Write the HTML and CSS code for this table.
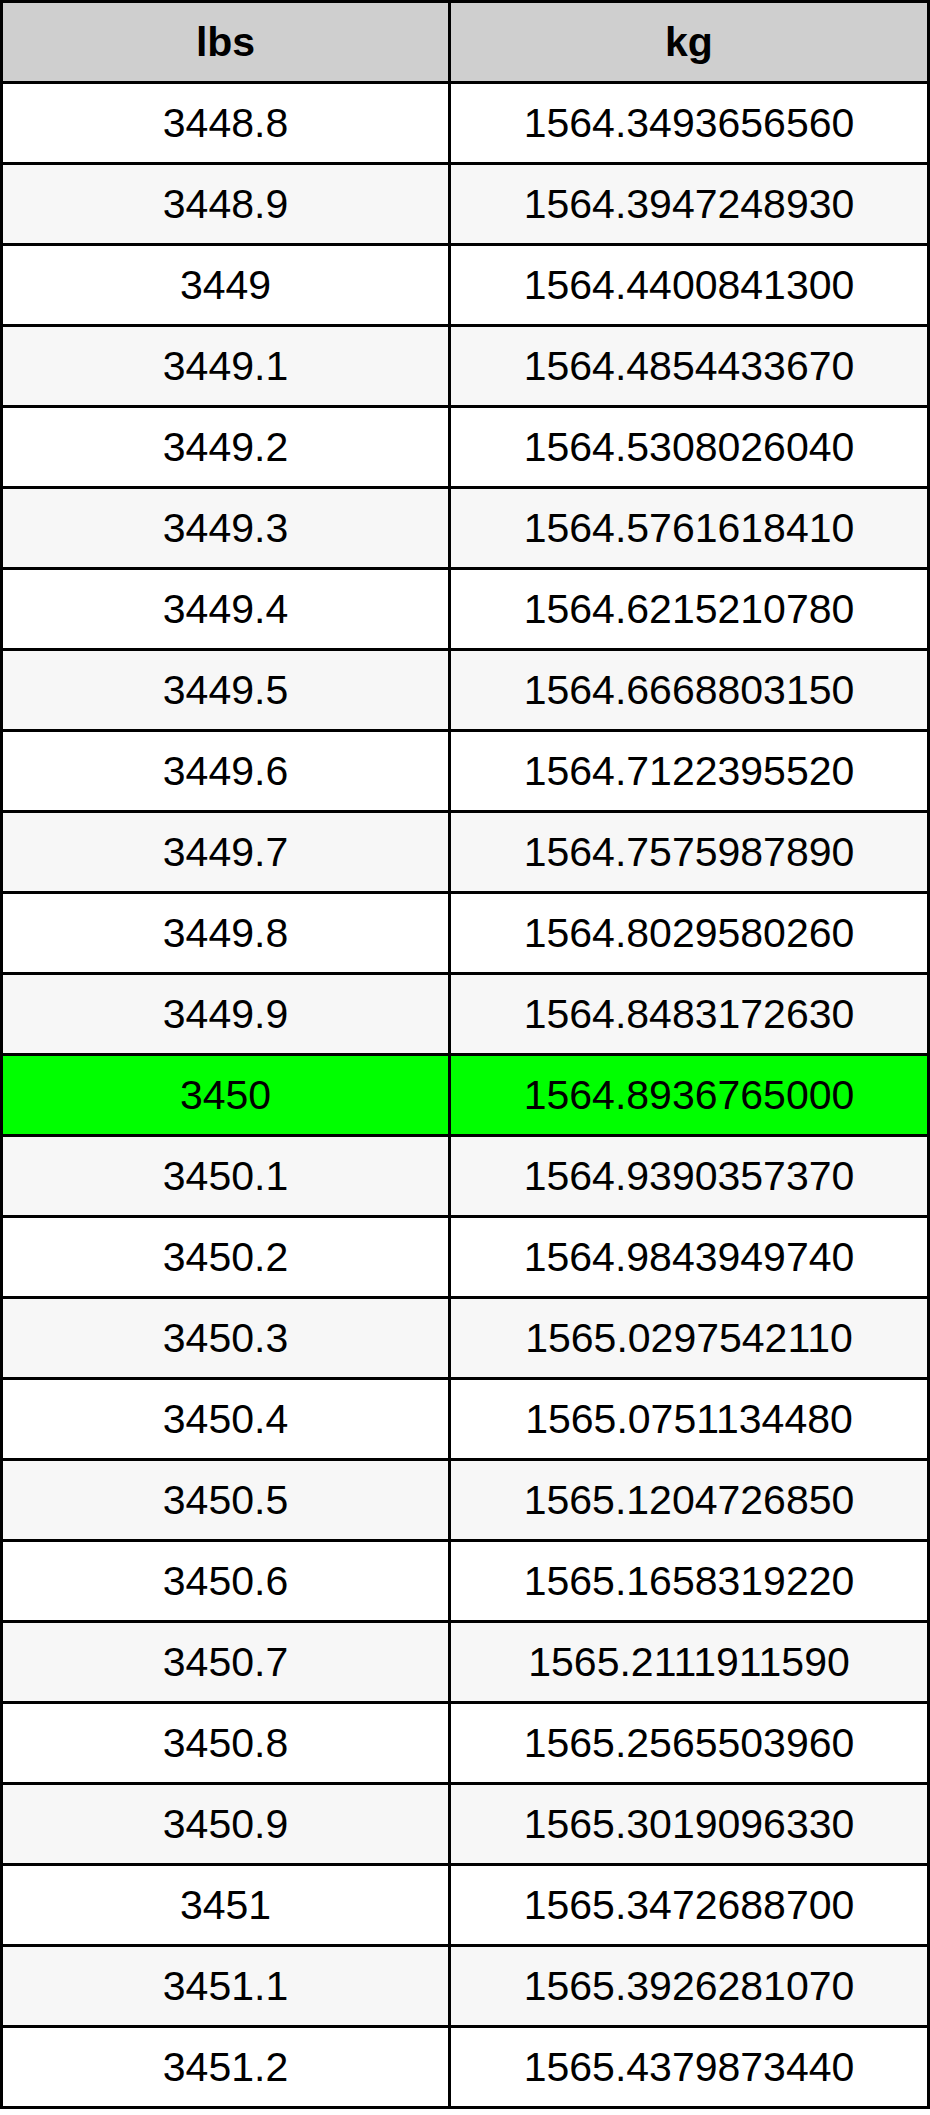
FILE: index.html
```html
<!DOCTYPE html>
<html>
<head>
<meta charset="utf-8">
<link rel="stylesheet" href="styles.css">
</head>
<body>
<table class="conv">
<colgroup><col class="c1"><col class="c2"></colgroup>
<thead>
<tr><th>lbs</th><th>kg</th></tr>
</thead>
<tbody>
<tr><td>3448.8</td><td>1564.3493656560</td></tr>
<tr class="alt"><td>3448.9</td><td>1564.3947248930</td></tr>
<tr><td>3449</td><td>1564.4400841300</td></tr>
<tr class="alt"><td>3449.1</td><td>1564.4854433670</td></tr>
<tr><td>3449.2</td><td>1564.5308026040</td></tr>
<tr class="alt"><td>3449.3</td><td>1564.5761618410</td></tr>
<tr><td>3449.4</td><td>1564.6215210780</td></tr>
<tr class="alt"><td>3449.5</td><td>1564.6668803150</td></tr>
<tr><td>3449.6</td><td>1564.7122395520</td></tr>
<tr class="alt"><td>3449.7</td><td>1564.7575987890</td></tr>
<tr><td>3449.8</td><td>1564.8029580260</td></tr>
<tr class="alt"><td>3449.9</td><td>1564.8483172630</td></tr>
<tr class="hl"><td>3450</td><td>1564.8936765000</td></tr>
<tr class="alt"><td>3450.1</td><td>1564.9390357370</td></tr>
<tr><td>3450.2</td><td>1564.9843949740</td></tr>
<tr class="alt"><td>3450.3</td><td>1565.0297542110</td></tr>
<tr><td>3450.4</td><td>1565.0751134480</td></tr>
<tr class="alt"><td>3450.5</td><td>1565.1204726850</td></tr>
<tr><td>3450.6</td><td>1565.1658319220</td></tr>
<tr class="alt"><td>3450.7</td><td>1565.2111911590</td></tr>
<tr><td>3450.8</td><td>1565.2565503960</td></tr>
<tr class="alt"><td>3450.9</td><td>1565.3019096330</td></tr>
<tr><td>3451</td><td>1565.3472688700</td></tr>
<tr class="alt"><td>3451.1</td><td>1565.3926281070</td></tr>
<tr><td>3451.2</td><td>1565.4379873440</td></tr>
</tbody>
</table>
</body>
</html>
```
FILE: styles.css
```css
html, body {
  margin: 0;
  padding: 0;
  background: #ffffff;
}
.conv {
  width: 930px;
  border-collapse: separate;
  border-spacing: 0;
  table-layout: fixed;
  border-top: 3px solid #000;
  border-left: 3px solid #000;
  font-family: "Liberation Sans", Arial, sans-serif;
  font-size: 41px;
  color: #000;
}
.c1 { width: 448px; }
.conv th, .conv td {
  box-sizing: border-box;
  height: 81px;
  padding: 0;
  text-align: center;
  vertical-align: middle;
  border-right: 3px solid #000;
  border-bottom: 3px solid #000;
  line-height: 1;
}
.conv th {
  background: #cfcfcf;
  font-weight: bold;
}
.conv td { background: #ffffff; font-weight: normal; }
.conv tr.alt td { background: #f7f7f7; }
.conv tr.hl td { background: #00ff00; }
```
